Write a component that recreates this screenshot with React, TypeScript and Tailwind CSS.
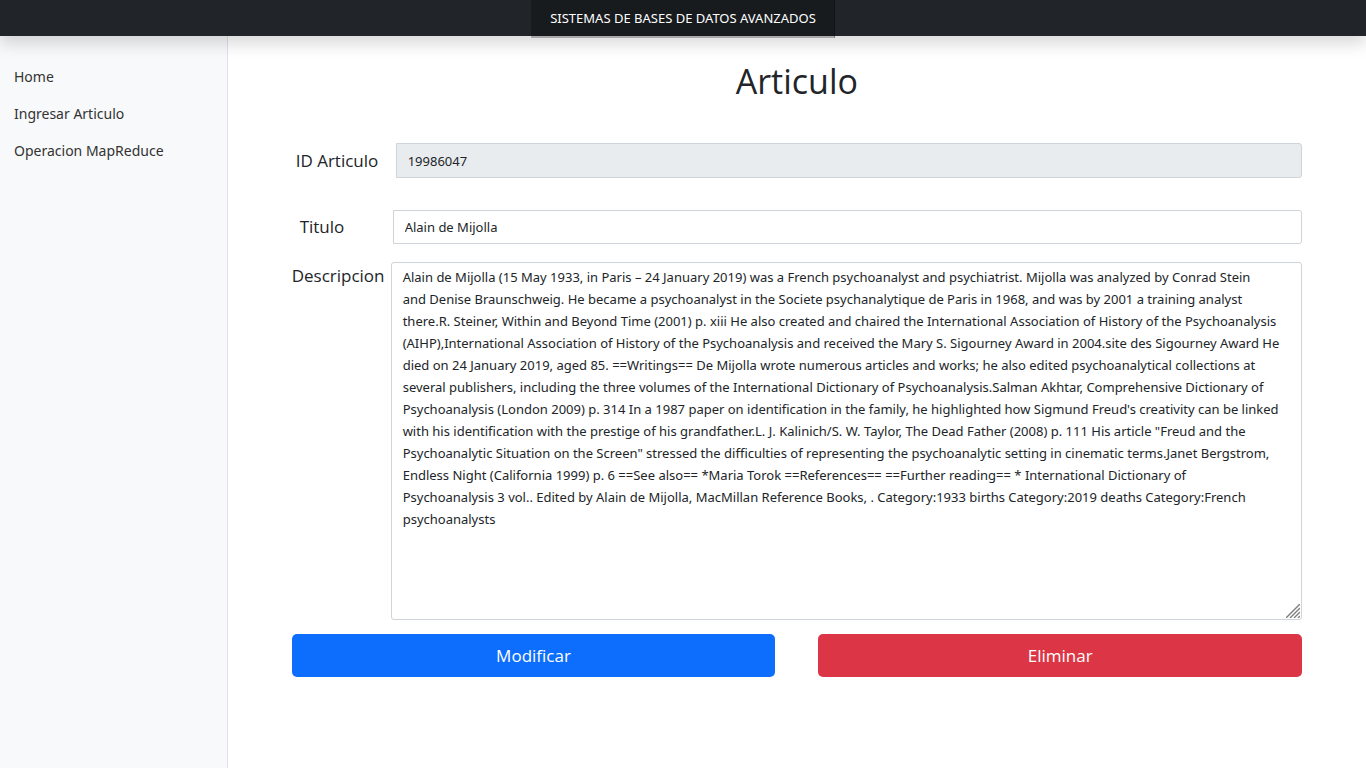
import React from "react";

const description = [
  "Alain de Mijolla (15 May 1933, in Paris – 24 January 2019) was a French psychoanalyst and psychiatrist. Mijolla was analyzed by Conrad Stein",
  "and Denise Braunschweig. He became a psychoanalyst in the Societe psychanalytique de Paris in 1968, and was by 2001 a training analyst",
  "there.R. Steiner, Within and Beyond Time (2001) p. xiii He also created and chaired the International Association of History of the Psychoanalysis",
  "(AIHP),International Association of History of the Psychoanalysis and received the Mary S. Sigourney Award in 2004.site des Sigourney Award He",
  "died on 24 January 2019, aged 85. ==Writings== De Mijolla wrote numerous articles and works; he also edited psychoanalytical collections at",
  "several publishers, including the three volumes of the International Dictionary of Psychoanalysis.Salman Akhtar, Comprehensive Dictionary of",
  "Psychoanalysis (London 2009) p. 314 In a 1987 paper on identification in the family, he highlighted how Sigmund Freud's creativity can be linked",
  "with his identification with the prestige of his grandfather.L. J. Kalinich/S. W. Taylor, The Dead Father (2008) p. 111 His article \"Freud and the",
  "Psychoanalytic Situation on the Screen\" stressed the difficulties of representing the psychoanalytic setting in cinematic terms.Janet Bergstrom,",
  "Endless Night (California 1999) p. 6 ==See also== *Maria Torok ==References== ==Further reading== * International Dictionary of",
  "Psychoanalysis 3 vol.. Edited by Alain de Mijolla, MacMillan Reference Books, . Category:1933 births Category:2019 deaths Category:French",
  "psychoanalysts",
].join("\n");

const links = ["Home", "Ingresar Articulo", "Operacion MapReduce"];

export default function App() {
  return (
    <div className="flex min-h-screen flex-col bg-white font-['Segoe_UI','Noto_Sans',sans-serif] text-[#212529]">
      <header className="z-10 flex h-9 items-start justify-center bg-[#212529] shadow-[0_8px_16px_rgba(0,0,0,0.15)]">
        <a
          href="#"
          className="flex h-[38px] items-start bg-black/25 px-[19px] pt-2 text-[13px] leading-5 text-white shadow-[inset_-1px_0_0_rgba(0,0,0,0.25)]"
        >
          SISTEMAS DE BASES DE DATOS AVANZADOS
        </a>
      </header>

      <div className="flex flex-1">
        <nav className="w-1/6 border-r border-[#dee2e6] bg-[#f8f9fa] pt-[22px]">
          <ul>
            {links.map((label) => (
              <li key={label}>
                <a href="#" className="block px-[14px] py-2 text-[14px] leading-[21px] text-[#333]">
                  {label}
                </a>
              </li>
            ))}
          </ul>
        </nav>

        <main className="flex-1 px-16 pt-6">
          <h1 className="text-center font-['Segoe_UI','Open_Sans',sans-serif] text-[34px] leading-[43px]">Articulo</h1>

          <form className="mt-10" onSubmit={(e) => e.preventDefault()}>
            <div className="flex items-center">
              <label htmlFor="id" className="w-[104px] px-1 font-['Segoe_UI','Open_Sans',sans-serif] text-[17px] leading-7">
                ID Articulo
              </label>
              <input
                id="id"
                readOnly
                defaultValue="19986047"
                className="h-[35px] min-w-0 flex-1 rounded-r-[3px] border border-[#ced4da] bg-[#e9ecef] px-[11px] text-[13px] outline-none"
              />
            </div>

            <div className="mt-8 flex items-center">
              <label htmlFor="titulo" className="w-[101px] px-2 font-['Segoe_UI','Open_Sans',sans-serif] text-[17px] leading-7">
                Titulo
              </label>
              <input
                id="titulo"
                defaultValue="Alain de Mijolla"
                className="h-[34px] min-w-0 flex-1 rounded-r-[3px] border border-[#ced4da] bg-white px-[11px] text-[13px] outline-none"
              />
            </div>

            <div className="mt-[18px] flex items-start">
              <label htmlFor="descripcion" className="w-[99px] font-['Segoe_UI','Open_Sans',sans-serif] text-[17px] leading-7">
                Descripcion
              </label>
              <div className="relative min-w-0 flex-1">
                <textarea
                  id="descripcion"
                  defaultValue={description}
                  className="block h-[358px] w-full resize-none rounded-[3px] border border-[#ced4da] bg-white px-[11px] pt-[3px] text-[13px] leading-[22px] outline-none"
                />
                <svg
                  className="pointer-events-none absolute right-[2px] bottom-[2px]"
                  width="14"
                  height="14"
                  viewBox="0 0 14 14"
                  stroke="#7c7c7c"
                  strokeWidth="1.4"
                  aria-hidden="true"
                >
                  <path d="M0 14 14 0M4 14 14 4M8 14l6-6M12 14l2-2" />
                </svg>
              </div>
            </div>

            <div className="mt-[14px] grid grid-cols-2 gap-[43px] font-['Segoe_UI','Open_Sans',sans-serif]">
              <button type="submit" className="h-[43px] rounded-[5px] bg-[#0d6efd] text-[17px] text-white">
                Modificar
              </button>
              <button type="button" className="h-[43px] rounded-[5px] bg-[#dc3545] text-[17px] text-white">
                Eliminar
              </button>
            </div>
          </form>
        </main>
      </div>
    </div>
  );
}
